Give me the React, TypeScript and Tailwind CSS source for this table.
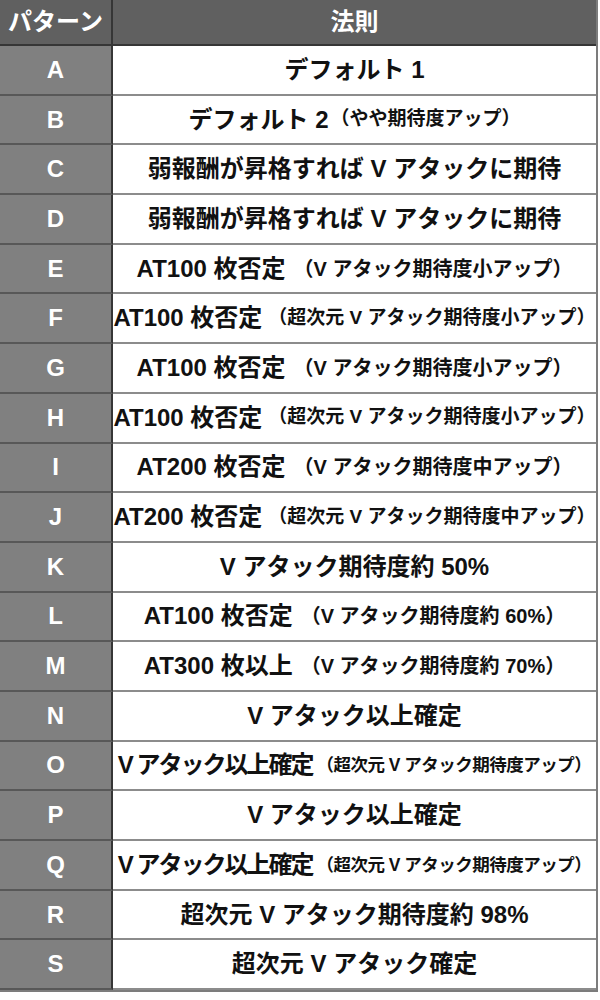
import React from 'react';

type Row = {
  key: string;
  main: string;
  note?: string;
  // long rows are squeezed a little so they fit the cell
  fit?: 'long' | 'tight';
};

const rows: Row[] = [
  { key: 'A', main: 'デフォルト 1' },
  { key: 'B', main: 'デフォルト 2', note: '（やや期待度アップ）' },
  { key: 'C', main: '弱報酬が昇格すれば V アタックに期待' },
  { key: 'D', main: '弱報酬が昇格すれば V アタックに期待' },
  { key: 'E', main: 'AT100 枚否定', note: '（V アタック期待度小アップ）' },
  { key: 'F', main: 'AT100 枚否定', note: '（超次元 V アタック期待度小アップ）', fit: 'long' },
  { key: 'G', main: 'AT100 枚否定', note: '（V アタック期待度小アップ）' },
  { key: 'H', main: 'AT100 枚否定', note: '（超次元 V アタック期待度小アップ）', fit: 'long' },
  { key: 'I', main: 'AT200 枚否定', note: '（V アタック期待度中アップ）' },
  { key: 'J', main: 'AT200 枚否定', note: '（超次元 V アタック期待度中アップ）', fit: 'long' },
  { key: 'K', main: 'V アタック期待度約 50%' },
  { key: 'L', main: 'AT100 枚否定', note: '（V アタック期待度約 60%）' },
  { key: 'M', main: 'AT300 枚以上', note: '（V アタック期待度約 70%）' },
  { key: 'N', main: 'V アタック以上確定' },
  { key: 'O', main: 'V アタック以上確定', note: '（超次元 V アタック期待度アップ）', fit: 'tight' },
  { key: 'P', main: 'V アタック以上確定' },
  { key: 'Q', main: 'V アタック以上確定', note: '（超次元 V アタック期待度アップ）', fit: 'tight' },
  { key: 'R', main: '超次元 V アタック期待度約 98%' },
  { key: 'S', main: '超次元 V アタック確定' },
];

const font = 'font-["Liberation_Sans","Noto_Sans_CJK_JP",sans-serif]';

function noteClass(row: Row) {
  if (row.fit === 'tight') return 'text-[17.5px] tracking-[-0.5px] ml-[4px]';
  if (row.fit === 'long') return 'text-[19px] ml-[6px]';
  if (row.key === 'B') return 'text-[19px] ml-[2px]';
  return 'text-[20px] ml-[8px]';
}

export default function App() {
  return (
    <div className={`w-[600px] h-[1000px] bg-white ${font} font-bold`}>
      <div className="w-[598px] border-r-2 border-b-2 border-[#7c7c7c]">
        {/* Header */}
        <div className="flex h-[46px] bg-[#606060] border-b-2 border-[#363636] text-white text-[24px]">
          <div className="w-[113px] shrink-0 flex items-center justify-center border-r-2 border-[#363636]">
            パターン
          </div>
          <div className="flex-1 flex items-center justify-center">法則</div>
        </div>

        {/* Body */}
        {rows.map((row) => (
          <div key={row.key} className="flex h-[49.7px]">
            <div className="w-[113px] shrink-0 flex items-center justify-center bg-[#808080] border-r-2 border-r-[#363636] border-b-2 border-b-[#585858] text-white text-[24px]">
              {row.key}
            </div>
            <div className="flex-1 min-w-0 flex items-center justify-center bg-white border-b-2 border-[#8c8c8c] text-[#111] whitespace-nowrap">
              <span className={row.fit === 'tight' ? 'text-[24px] tracking-[-2px]' : 'text-[24px]'}>{row.main}</span>
              {row.note && <span className={noteClass(row)}>{row.note}</span>}
            </div>
          </div>
        ))}
      </div>
    </div>
  );
}
